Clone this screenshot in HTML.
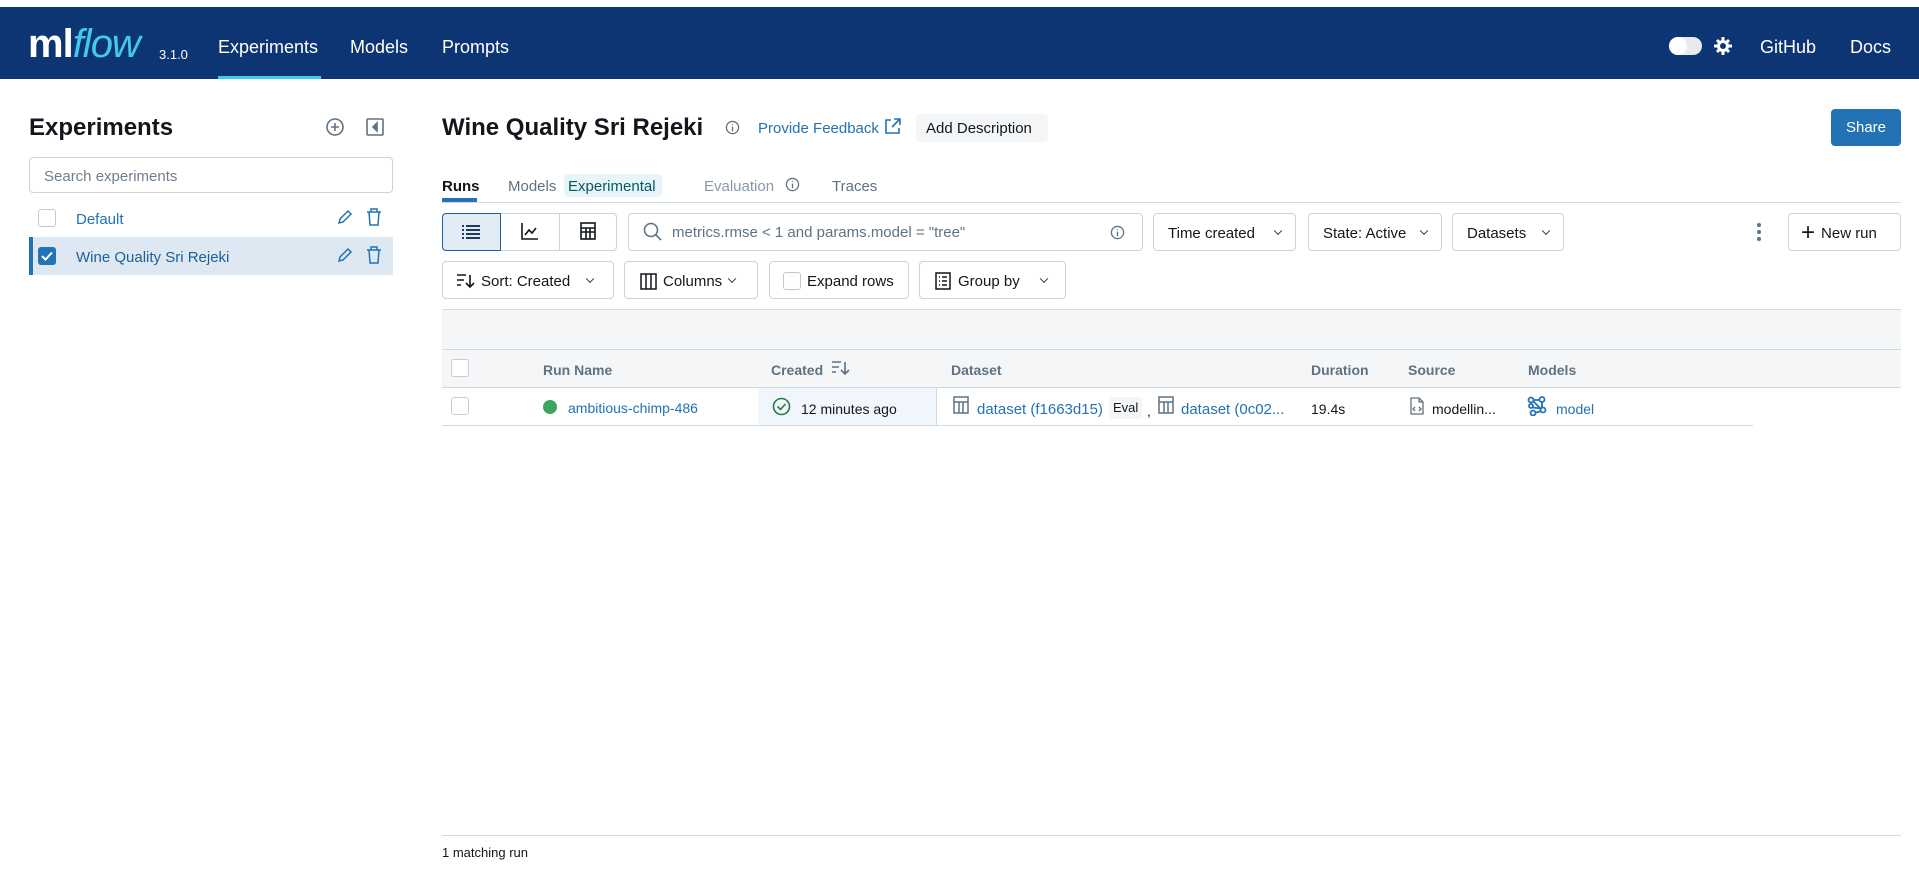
<!DOCTYPE html>
<html><head><meta charset="utf-8"><style>
*{box-sizing:border-box;margin:0;padding:0}
body{width:1919px;height:871px;background:#fff;font-family:"Liberation Sans",sans-serif;color:#11171c;position:relative;overflow:hidden}
.a{position:absolute;white-space:nowrap}
.nav{position:absolute;left:0;top:7px;width:1919px;height:72px;background:#0e3573}
.btn{position:absolute;border:1px solid #cbd3db;border-radius:4px;background:#fff;font-size:15px;display:flex;align-items:center;padding-left:14px;color:#11171c}
.blue{color:#2272b4}
.chev{position:absolute;right:14px;top:50%;width:6px;height:6px;border-right:1.5px solid #333;border-bottom:1.5px solid #333;transform:translateY(-70%) rotate(45deg)}
.cb{position:absolute;width:18px;height:18px;border:1px solid #c0c8d0;border-radius:3px;background:#fff}
.hd{position:absolute;font-size:14px;color:#5f7281;font-weight:600}
.cell{position:absolute;font-size:14px}
</style></head><body>
<div class="nav"></div>
<div class="a" style="left:28px;top:22px;font-size:40px;color:#fff;font-weight:600;letter-spacing:-1px">ml<span style="color:#43c9ed;font-style:italic;font-weight:400">flow</span></div>
<div class="a" style="left:159px;top:47px;font-size:13px;color:#fff">3.1.0</div>
<div class="a" style="left:218px;top:37px;font-size:18px;color:#fff">Experiments</div>
<div class="a" style="left:218px;top:76px;width:103px;height:3px;background:#43c9ed"></div>
<div class="a" style="left:350px;top:37px;font-size:18px;color:#fff">Models</div>
<div class="a" style="left:442px;top:37px;font-size:18px;color:#fff">Prompts</div>
<div class="a" style="left:1669px;top:37px;width:33px;height:18px;border-radius:9px;background:#e8ebee"></div>
<div class="a" style="left:1669px;top:37px;width:18px;height:18px;border-radius:9px;background:#fff"></div>
<svg class="a" style="left:1713px;top:36px" width="20" height="20" viewBox="0 0 20 20"><g stroke="#fff" stroke-width="3"><line x1="10" y1="1" x2="10" y2="19"/><line x1="1" y1="10" x2="19" y2="10"/><line x1="4" y1="4" x2="16" y2="16"/><line x1="16" y1="4" x2="4" y2="16"/></g><circle cx="10" cy="10" r="6" fill="#fff"/><circle cx="10" cy="10" r="3" fill="#0e3573"/></svg>
<div class="a" style="left:1760px;top:37px;font-size:18px;color:#fff">GitHub</div>
<div class="a" style="left:1850px;top:37px;font-size:18px;color:#fff">Docs</div>

<div class="a" style="left:29px;top:114px;font-size:24px;font-weight:600">Experiments</div>
<svg class="a" style="left:325px;top:117px" width="20" height="20" viewBox="0 0 20 20" fill="none" stroke="#5f7281" stroke-width="1.6"><circle cx="10" cy="10" r="8"/><path d="M10 6v8M6 10h8"/></svg>
<svg class="a" style="left:366px;top:118px" width="18" height="18" viewBox="0 0 18 18" fill="none" stroke="#5f7281" stroke-width="1.6"><rect x="1" y="1" width="16" height="16" rx="1"/><path d="M11 5l-4 4 4 4z" fill="#5f7281"/></svg>
<div class="a" style="left:29px;top:157px;width:364px;height:36px;border:1px solid #cbd3db;border-radius:4px;font-size:15px;color:#6f7e8c;padding:10px 14px">Search experiments</div>
<div class="cb" style="left:38px;top:209px"></div>
<div class="a blue" style="left:76px;top:211px;font-size:15px">Default</div>
<svg class="a" style="left:337px;top:209px" width="16" height="16" viewBox="0 0 16 16" fill="none" stroke="#2272b4" stroke-width="1.5"><path d="M2 14l1-4 8-8 3 3-8 8z"/></svg>
<svg class="a" style="left:366px;top:208px" width="16" height="18" viewBox="0 0 16 18" fill="none" stroke="#2272b4" stroke-width="1.5"><path d="M1 4h14M5 4V1h6v3M3 4l1 13h8l1-13"/></svg>
<div class="a" style="left:29px;top:237px;width:364px;height:38px;background:#dde8f3;border-left:4px solid #2272b4"></div>
<div class="a" style="left:38px;top:247px;width:18px;height:18px;border-radius:3px;background:#2272b4"></div>
<svg class="a" style="left:38px;top:247px" width="18" height="18"><path d="M4 9l3.5 3.5L14 5.5" stroke="#fff" stroke-width="2" fill="none"/></svg>
<div class="a blue" style="left:76px;top:249px;font-size:15px;color:#1f5f96">Wine Quality Sri Rejeki</div>
<svg class="a" style="left:337px;top:247px" width="16" height="16" viewBox="0 0 16 16" fill="none" stroke="#2272b4" stroke-width="1.5"><path d="M2 14l1-4 8-8 3 3-8 8z"/></svg>
<svg class="a" style="left:366px;top:246px" width="16" height="18" viewBox="0 0 16 18" fill="none" stroke="#2272b4" stroke-width="1.5"><path d="M1 4h14M5 4V1h6v3M3 4l1 13h8l1-13"/></svg>

<div class="a" style="left:442px;top:114px;font-size:24px;font-weight:600">Wine Quality Sri Rejeki</div>
<svg class="a" style="left:725px;top:120px" width="15" height="15" viewBox="0 0 16 16" fill="none" stroke="#5f7281" stroke-width="1.4"><circle cx="8" cy="8" r="6.5"/><path d="M8 7v5M8 4.5v1"/></svg>
<div class="a blue" style="left:758px;top:120px;font-size:15px">Provide Feedback</div>
<svg class="a" style="left:884px;top:118px" width="17" height="17" viewBox="0 0 17 17" fill="none" stroke="#2272b4" stroke-width="1.6"><path d="M7 2H2v13h13v-5M10 1h6v6M16 1L8 9"/></svg>
<div class="a" style="left:916px;top:114px;width:132px;height:28px;background:#f3f5f7;border-radius:4px;font-size:15px;padding:6px 10px">Add Description</div>
<div class="a" style="left:1831px;top:109px;width:70px;height:37px;background:#2272b4;border-radius:4px;color:#fff;font-size:15px;padding:10px 0;text-align:center">Share</div>

<div class="a" style="left:442px;top:178px;font-size:15px;font-weight:600">Runs</div>
<div class="a" style="left:442px;top:198px;width:35px;height:4px;background:#2272b4"></div>
<div class="a" style="left:508px;top:178px;font-size:15px;color:#5f7281">Models</div>
<div class="a" style="left:564px;top:174px;width:98px;height:23px;background:#e6f5f8;border-radius:4px;font-size:15px;color:#0b5566;padding:4px 4px">Experimental</div>
<div class="a" style="left:704px;top:178px;font-size:15px;color:#8b99a6">Evaluation</div>
<svg class="a" style="left:785px;top:177px" width="15" height="15" viewBox="0 0 16 16" fill="none" stroke="#5f7281" stroke-width="1.4"><circle cx="8" cy="8" r="6.5"/><path d="M8 7v5M8 4.5v1"/></svg>
<div class="a" style="left:832px;top:178px;font-size:15px;color:#5f7281">Traces</div>
<div class="a" style="left:442px;top:202px;width:1459px;height:1px;background:#d1d9e1"></div>

<div class="a" style="left:442px;top:213px;width:175px;height:38px;border:1px solid #cbd3db;border-radius:4px"></div>
<div class="a" style="left:442px;top:213px;width:59px;height:38px;background:#e1ecf6;border:1px solid #1f5f96;border-radius:4px 0 0 4px"></div>
<div class="a" style="left:559px;top:214px;width:1px;height:36px;background:#cbd3db"></div>
<svg class="a" style="left:462px;top:224px" width="18" height="16" fill="#1f3a5a"><rect x="0" y="1" width="2" height="2"/><rect x="4" y="1" width="14" height="2"/><rect x="0" y="5" width="2" height="2"/><rect x="4" y="5" width="14" height="2"/><rect x="0" y="9" width="2" height="2"/><rect x="4" y="9" width="14" height="2"/><rect x="0" y="13" width="2" height="2"/><rect x="4" y="13" width="14" height="2"/></svg>
<svg class="a" style="left:521px;top:223px" width="17" height="17" fill="none" stroke="#11171c" stroke-width="1.6"><path d="M1 0v16h16M4 12l4-5 3 3 4-5"/></svg>
<svg class="a" style="left:580px;top:222px" width="16" height="18" fill="none" stroke="#11171c" stroke-width="1.6"><rect x="1" y="1" width="14" height="16"/><path d="M1 6h14M1 10h14M6 6v11M10 6v11"/></svg>
<div class="a" style="left:628px;top:213px;width:515px;height:38px;border:1px solid #cbd3db;border-radius:4px"></div>
<svg class="a" style="left:643px;top:222px" width="20" height="20" fill="none" stroke="#5f7281" stroke-width="1.6"><circle cx="8" cy="8" r="6.5"/><path d="M13 13l5 5"/></svg>
<div class="a" style="left:672px;top:224px;font-size:15px;color:#5f7281">metrics.rmse &lt; 1 and params.model = "tree"</div>
<svg class="a" style="left:1110px;top:225px" width="15" height="15" viewBox="0 0 16 16" fill="none" stroke="#5f7281" stroke-width="1.4"><circle cx="8" cy="8" r="6.5"/><path d="M8 7v5M8 4.5v1"/></svg>
<div class="btn" style="left:1153px;top:213px;width:143px;height:38px;padding-top:2px">Time created<span class="chev"></span></div>
<div class="btn" style="left:1308px;top:213px;width:134px;height:38px;padding-top:2px">State: Active<span class="chev"></span></div>
<div class="btn" style="left:1452px;top:213px;width:112px;height:38px;padding-top:2px">Datasets<span class="chev"></span></div>
<div class="a" style="left:1757px;top:223px;width:4px;height:4px;border-radius:2px;background:#5f7281;box-shadow:0 7px 0 #5f7281,0 14px 0 #5f7281"></div>
<div class="btn" style="left:1788px;top:213px;width:113px;height:38px;padding-left:12px;padding-top:2px"><span style="font-size:24px;font-weight:300;margin-right:6px;line-height:1">+</span>New run</div>

<div class="btn" style="left:442px;top:261px;width:172px;height:38px;padding-left:14px;padding-top:2px"><svg width="18" height="16" style="margin-right:6px" fill="none" stroke="#11171c" stroke-width="1.6"><path d="M0 2h9M0 7h7M0 12h4M13 2v12M9 10l4 4 4-4"/></svg>Sort: Created<span class="chev" style="right:20px"></span></div>
<div class="btn" style="left:624px;top:261px;width:134px;height:38px;padding-left:15px;padding-top:2px"><svg width="17" height="17" style="margin-right:6px" fill="none" stroke="#11171c" stroke-width="1.5"><rect x="1" y="1" width="15" height="15"/><path d="M6 1v15M11 1v15"/></svg>Columns<span class="chev" style="right:22px"></span></div>
<div class="btn" style="left:769px;top:261px;width:140px;height:38px;padding-left:13px;padding-top:2px"><span style="width:18px;height:18px;border:1px solid #c0c8d0;border-radius:3px;margin-right:6px;display:inline-block"></span>Expand rows</div>
<div class="btn" style="left:919px;top:261px;width:147px;height:38px;padding-left:15px;padding-top:2px"><svg width="16" height="18" style="margin-right:7px" fill="none" stroke="#11171c" stroke-width="1.5"><rect x="1" y="1" width="14" height="16"/><path d="M4 5h1M7 5h5M4 9h1M7 9h5M4 13h1M7 13h5"/></svg>Group by<span class="chev" style="right:18px"></span></div>

<div class="a" style="left:442px;top:309px;width:1459px;height:79px;background:#f5f6f7;border-top:1px solid #d1d9e1;border-bottom:1px solid #d1d9e1"></div>
<div class="a" style="left:442px;top:349px;width:1459px;height:1px;background:#d1d9e1"></div>
<div class="cb" style="left:451px;top:359px;border-color:#c5cdd5"></div>
<div class="hd" style="left:543px;top:362px">Run Name</div>
<div class="hd" style="left:771px;top:362px">Created</div>
<svg class="a" style="left:832px;top:360px" width="18" height="16" fill="none" stroke="#5f7281" stroke-width="1.6"><path d="M0 2h9M0 7h7M0 12h4M13 2v12M9 10l4 4 4-4"/></svg>
<div class="hd" style="left:951px;top:362px">Dataset</div>
<div class="hd" style="left:1311px;top:362px">Duration</div>
<div class="hd" style="left:1408px;top:362px">Source</div>
<div class="hd" style="left:1528px;top:362px">Models</div>

<div class="a" style="left:758px;top:388px;width:179px;height:38px;background:#f0f6fc;border-right:1px solid #d1d9e1"></div>
<div class="a" style="left:442px;top:425px;width:1311px;height:1px;background:#d1d9e1"></div>
<div class="cb" style="left:451px;top:397px;border-color:#c5cdd5"></div>
<div class="a" style="left:543px;top:400px;width:14px;height:14px;border-radius:7px;background:#3ca55c"></div>
<div class="cell blue" style="left:568px;top:400px">ambitious-chimp-486</div>
<svg class="a" style="left:772px;top:397px" width="19" height="19" fill="none" stroke="#277c43" stroke-width="1.6"><circle cx="9.5" cy="9.5" r="8"/><path d="M5.5 9.5l3 3 5-5.5"/></svg>
<div class="cell" style="left:801px;top:401px">12 minutes ago</div>
<svg class="a" style="left:953px;top:396px" width="16" height="18" fill="none" stroke="#5f7281" stroke-width="1.5"><rect x="1" y="1" width="14" height="16"/><path d="M1 6h14M6 6v11M10 6v11"/></svg>
<div class="a blue" style="left:977px;top:401px;font-size:15px">dataset (f1663d15)</div>
<div class="a" style="left:1109px;top:397px;width:33px;height:22px;background:#f3f5f7;border-radius:4px;font-size:13px;padding:3px 4px">Eval</div>
<div class="a" style="left:1147px;top:403px;font-size:14px">,</div>
<svg class="a" style="left:1158px;top:396px" width="16" height="18" fill="none" stroke="#5f7281" stroke-width="1.5"><rect x="1" y="1" width="14" height="16"/><path d="M1 6h14M6 6v11M10 6v11"/></svg>
<div class="a blue" style="left:1181px;top:401px;font-size:15px">dataset (0c02...</div>
<div class="cell" style="left:1311px;top:401px">19.4s</div>
<svg class="a" style="left:1410px;top:397px" width="14" height="18" fill="none" stroke="#5f7281" stroke-width="1.3"><path d="M1 1h8l4 4v12H1zM9 1v4h4M5 10l-2 2 2 2M9 10l2 2-2 2"/></svg>
<div class="cell" style="left:1432px;top:401px">modellin...</div>
<svg class="a" style="left:1527px;top:396px" width="20" height="20" fill="none" stroke="#2272b4" stroke-width="1.8"><circle cx="4" cy="4" r="2.5"/><circle cx="15" cy="3.5" r="2.5"/><circle cx="16" cy="14" r="2.5"/><circle cx="6" cy="17" r="2.5"/><circle cx="4" cy="10" r="2"/><path d="M6 4h7M15 6v6M14 15l-6 2M4 6.5v1.5M5.5 11.5l9 1M6 5l8 8"/></svg>
<div class="a blue" style="left:1556px;top:401px;font-size:14px">model</div>

<div class="a" style="left:442px;top:835px;width:1459px;height:1px;background:#d1d9e1"></div>
<div class="a" style="left:442px;top:845px;font-size:13px">1 matching run</div>
</body></html>
